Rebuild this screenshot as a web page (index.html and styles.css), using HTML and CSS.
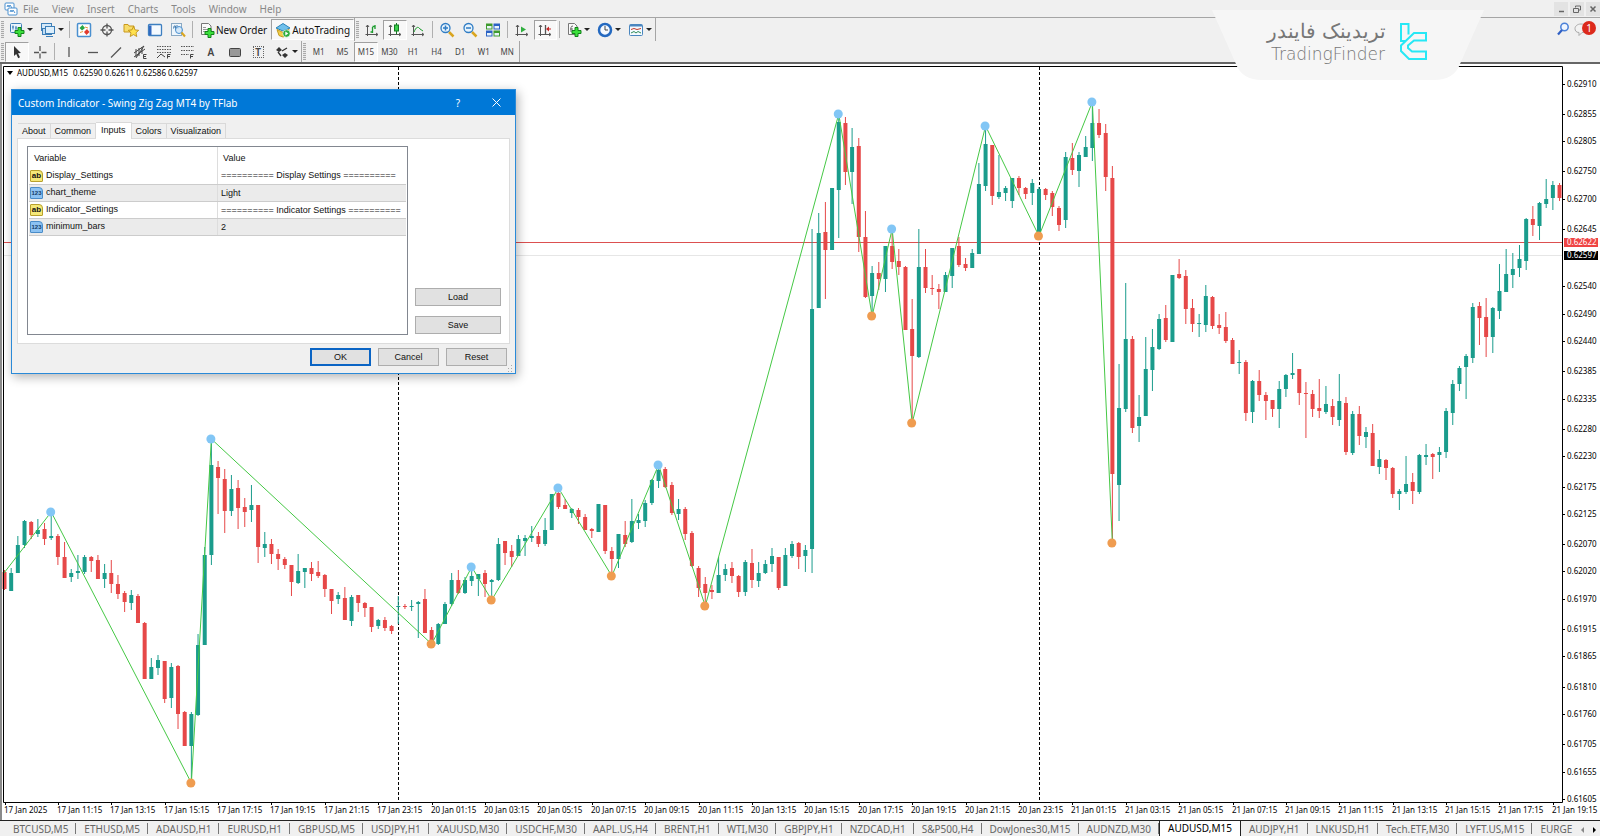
FILE: index.html
```html
<!DOCTYPE html>
<html lang="en">
<head>
    <meta charset="UTF-8">
    <meta name="viewport" content="width=device-width, initial-scale=1.0">
    <title>AUDUSD,M15</title>
    <link rel="stylesheet" href="styles.css">
</head>
<body>
    <header class="menubar">
        <svg class="app-icon" width="14" height="14" viewBox="0 0 14 14"><rect x="1" y="1" width="9" height="7" rx="1" fill="#fff" stroke="#4a90d0"/><path d="M3 5l1-2 1 2 1-2 2 3" fill="none" stroke="#4a90d0"/><rect x="4" y="6" width="9" height="7" rx="1" fill="#fff" stroke="#4a90d0"/><path d="M6 10l1-2 1 2 1-2 2 3" fill="none" stroke="#4a90d0"/></svg>
        <nav class="menu">
            <button>File</button>
            <button>View</button>
            <button>Insert</button>
            <button>Charts</button>
            <button>Tools</button>
            <button>Window</button>
            <button>Help</button>
        </nav>
        <div class="window-buttons">
            <button aria-label="Minimize"><svg width="8" height="8" viewBox="0 0 8 8"><path d="M2 6.500h5" stroke="#666" stroke-width="1.500"/></svg></button>
            <button aria-label="Restore"><svg width="8" height="8" viewBox="0 0 8 8"><path d="M2.500 2.500v-1.500h5v4h-1.500M.5 3.500h5v4h-5z" fill="none" stroke="#666"/></svg></button>
            <button aria-label="Close"><svg width="8" height="8" viewBox="0 0 8 8"><path d="M1.500 1.500l5 5M6.500 1.500l-5 5" stroke="#666" stroke-width="1.500"/></svg></button>
        </div>
    </header>

    <div class="toolbars">
        <div class="toolbar">
            <span class="grip"></span>
            <div class="group drops">
                <button aria-label="New chart"><svg class="icon" viewBox="0 0 16 16"><rect x="1.500" y="1.500" width="11" height="9" rx="1" fill="#eaf4fc" stroke="#3d7fb8"/><path d="M4 3.500v4M3 5h2M7 4v4M6 6h2" stroke="#3d7fb8"/><path d="M9 5.500h3v3h3v3h-3v3h-3v-3h-3v-3h3z" fill="#3be03b" stroke="#12821a"/></svg><i class="arrow"></i></button>
                <button aria-label="Profiles"><svg class="icon" viewBox="0 0 16 16"><rect x="1.500" y="1.500" width="10" height="7" fill="#d5e9f8" stroke="#3d7fb8"/><rect x="2.500" y="6.500" width="9" height="6" fill="#c2ddf4" stroke="#3d7fb8"/><rect x="5.500" y="4.500" width="9" height="7" fill="#dceefb" stroke="#3d7fb8"/><path d="M6 14.500h7" stroke="#3d7fb8"/></svg><i class="arrow"></i></button>
            </div>
            <span class="sep"></span>
            <div class="group five">
                <button aria-label="Market Watch"><svg class="icon" viewBox="0 0 16 16"><rect x="1.500" y="1.500" width="13" height="13" rx="1" fill="#fff" stroke="#4a90d0" stroke-width="1.500"/><path d="M3.500 6l3-3 2.500 3-3 2.500z" fill="#28a745"/><path d="M8 10l3-3 2.500 3-3 3z" fill="#e23b2e"/><path d="M4 10.500l3-1M9 5l3 1" stroke="#e89a3c"/></svg></button>
                <button aria-label="Data Window"><svg class="icon" viewBox="0 0 16 16"><circle cx="8" cy="8" r="4.500" fill="none" stroke="#555" stroke-width="1.300"/><path d="M8 1.500v5M8 9.500v5M1.500 8h5M9.500 8h5" stroke="#555" stroke-width="1.300"/></svg></button>
                <button aria-label="Navigator"><svg class="icon" viewBox="0 0 16 16"><path d="M1 2.500h4l1 1.500h5v6h-10z" fill="#f7dc6a" stroke="#c9981d"/><path d="M10.500 4.500l1.600 3.400 3.600.4-2.700 2.500.8 3.700-3.300-1.900-3.300 1.900.8-3.700-2.700-2.500 3.600-.4z" fill="#ffe14d" stroke="#b8860b" stroke-width=".8"/></svg></button>
                <button aria-label="Terminal"><svg class="icon" viewBox="0 0 16 16"><rect x="1.500" y="2.500" width="13" height="11" rx="1" fill="#f5faff" stroke="#3d7fc0" stroke-width="1.300"/><path d="M2 3.500h2.500v9.500h-2.500z" fill="#3169c0"/></svg></button>
                <button aria-label="Strategy Tester"><svg class="icon" viewBox="0 0 16 16"><rect x="1.500" y="1.500" width="10" height="12" fill="#eef6fc" stroke="#8aa9c4"/><path d="M3 6h1v-2h1.500v4M7 3v3h2" fill="none" stroke="#4a7fae"/><circle cx="9" cy="8" r="3.500" fill="#cfe6f8" fill-opacity=".8" stroke="#4a90d0"/><path d="M11.500 10.500l3.500 4" stroke="#d9a520" stroke-width="2"/></svg></button>
            </div>
            <span class="sep"></span>
            <button class="text-btn"><svg class="icon" viewBox="0 0 16 16"><path d="M2.500 1.500h7l2.500 2.500v8.500h-9.500z" fill="#fafafa" stroke="#777"/><path d="M4 5.500h3M4 7.500h5M4 9.500h2" stroke="#999"/><path d="M9 6.500h3v3h3v3h-3v3h-3v-3h-3v-3h3z" fill="#3be03b" stroke="#12821a"/></svg>New Order</button>
            <button class="text-btn pressed"><svg class="icon" viewBox="0 0 16 16"><path d="M1 6l7-4.500 7 4.500-7 3z" fill="#6fc0ec" stroke="#2c83b8"/><path d="M2 7.500l6 3 6-3-2 6-4 1.500-4-1.500z" fill="#f2cf4a" stroke="#c29a1c"/><circle cx="11.500" cy="11.500" r="3.700" fill="#2fae3e" stroke="#fff" stroke-width=".6"/><path d="M10.300 9.500l3 2-3 2z" fill="#fff"/></svg>AutoTrading</button>
            <span class="edge"></span>
            <span class="grip"></span>
            <div class="group three">
                <button aria-label="Bar Chart"><svg class="icon" viewBox="0 0 16 16"><path d="M3.500 3v11M1.500 12.500h12M2 5l1.500-2 1.500 2M12 11l2 1.500-2 1.500" fill="none" stroke="#555"/><path d="M8.500 5v6M8.500 4.500h3M6.500 10h2M11 3v4" stroke="#1c9c2e" stroke-width="1.300"/></svg></button>
                <button class="pressed" aria-label="Candlesticks"><svg class="icon" viewBox="0 0 16 16"><path d="M3.500 3v11M1.500 12.500h12M2 5l1.500-2 1.500 2M12 11l2 1.500-2 1.500" fill="none" stroke="#555"/><path d="M9.500 1v11" stroke="#147a22"/><rect x="7.500" y="3" width="4" height="6" fill="#3bd04c" stroke="#147a22"/></svg></button>
                <button aria-label="Line Chart"><svg class="icon" viewBox="0 0 16 16"><path d="M3.500 3v11M1.500 12.500h12M2 5l1.500-2 1.500 2M12 11l2 1.500-2 1.500" fill="none" stroke="#555"/><path d="M4 10c2-5 4-6 6-3l3 2" fill="none" stroke="#1c9c2e"/></svg></button>
            </div>
            <span class="sep"></span>
            <div class="group three">
                <button aria-label="Zoom In"><svg class="icon" viewBox="0 0 16 16"><path d="M10 10l4.500 4.500" stroke="#d9a520" stroke-width="2.500"/><circle cx="6.500" cy="6" r="4.500" fill="#e6f3fc" stroke="#2f7cc4" stroke-width="1.300"/><path d="M4 6h5M6.500 3.500v5" stroke="#2f7cc4" stroke-width="1.500"/></svg></button>
                <button aria-label="Zoom Out"><svg class="icon" viewBox="0 0 16 16"><path d="M10 10l4.500 4.500" stroke="#d9a520" stroke-width="2.500"/><circle cx="6.500" cy="6" r="4.500" fill="#e6f3fc" stroke="#2f7cc4" stroke-width="1.300"/><path d="M4 6h5" stroke="#2f7cc4" stroke-width="1.500"/></svg></button>
                <button aria-label="Tile Windows"><svg class="icon" viewBox="0 0 16 16"><path d="M1 1.500h6.500v6h-6.500zM8.500 8.500h6.500v6h-6.500z" fill="#3f9b2e"/><path d="M8.500 1.500h6.500v6h-6.500zM1 8.500h6.500v6h-6.500z" fill="#2b62c4"/><path d="M2 4h4.500v2.500h-4.500zM9.500 4h4.500v2.500h-4.500zM2 11h4.500v2.500h-4.500zM9.500 11h4.500v2.500h-4.500z" fill="#e8f3fb"/></svg></button>
            </div>
            <span class="sep"></span>
            <div class="group two">
                <button aria-label="Auto Scroll"><svg class="icon" viewBox="0 0 16 16"><path d="M3.500 3v11M1.500 12.500h12M2 5l1.500-2 1.500 2M12 11l2 1.500-2 1.500" fill="none" stroke="#555"/><path d="M7 4.500l5 3-5 3z" fill="#2fae3e"/></svg></button>
                <button class="pressed" aria-label="Chart Shift"><svg class="icon" viewBox="0 0 16 16"><path d="M3.500 3v11M1.500 12.500h12M2 5l1.500-2 1.500 2M12 11l2 1.500-2 1.500" fill="none" stroke="#555"/><path d="M8.500 3v9" stroke="#555" stroke-width="1.300"/><path d="M9 7l3-2.500v5z" fill="#c62828"/><path d="M11 7h3" stroke="#c62828"/></svg></button>
            </div>
            <span class="sep"></span>
            <div class="group drops">
                <button aria-label="Indicators"><svg class="icon" viewBox="0 0 16 16"><path d="M2.500 1.500h6l2.500 2.500v8.500h-8.500z" fill="#fafafa" stroke="#777"/><path d="M5 10V5.500q0-1.500 2-1.500M4 7h3" fill="none" stroke="#666"/><path d="M9 5.500h3v3h3v3h-3v3h-3v-3h-3v-3h3z" fill="#3be03b" stroke="#12821a"/></svg><i class="arrow"></i></button>
                <button aria-label="Periods"><svg class="icon" viewBox="0 0 16 16"><circle cx="8" cy="8" r="6" fill="#f4f9ff" stroke="#2469c0" stroke-width="2.500"/><path d="M8 4v4h3" fill="none" stroke="#444"/></svg><i class="arrow"></i></button>
                <button aria-label="Templates"><svg class="icon" viewBox="0 0 16 16"><rect x="1.500" y="2.500" width="13" height="11" rx="1" fill="#f4faff" stroke="#4a86bf"/><path d="M2 3.500h12" stroke="#4a86bf" stroke-width="2"/><path d="M3 7.500l3-1 3 1 4-1" fill="none" stroke="#c0392b"/><path d="M3 11l3-1.500 2 1.500 2-1.500 3 1.500" fill="none" stroke="#2e8b57"/></svg><i class="arrow"></i></button>
            </div>
            <span class="edge"></span>
            <div class="right-tools">
                <button aria-label="Search"><svg class="icon" viewBox="0 0 16 16"><circle cx="9.500" cy="6" r="3.700" fill="#eef5ff" stroke="#4a80d8" stroke-width="1.500"/><path d="M7 9l-4 4.500" stroke="#2f5fc4" stroke-width="2.200"/></svg></button>
                <button class="chat" aria-label="Messages"><svg class="icon" viewBox="0 0 16 16"><path d="M8 3c4 0 6 2 6 4.500s-2 4-5 4l-3 3v-3c-3 0-4-2-4-4s2-4.500 6-4.500z" fill="#f2f2f2" stroke="#aaa"/></svg><span class="count">1</span></button>
            </div>
        </div>

        <div class="toolbar second">
            <span class="grip"></span>
            <div class="group two">
                <button class="pressed" aria-label="Cursor"><svg class="icon" viewBox="0 0 16 16"><path d="M5 2l7 7-3 .2 2 4-1.800 1-2-4.200-2.200 2z" fill="#333"/></svg></button>
                <button aria-label="Crosshair"><svg class="icon" viewBox="0 0 16 16"><path d="M8 2v5M8 9.500v5M2 8.500h5M9.500 8.500h5" stroke="#555" stroke-width="1.300"/></svg></button>
            </div>
            <span class="sep"></span>
            <div class="group nine">
                <button aria-label="Vertical Line"><svg class="icon" viewBox="0 0 16 16"><path d="M8 3v10" stroke="#555" stroke-width="1.300"/></svg></button>
                <button aria-label="Horizontal Line"><svg class="icon" viewBox="0 0 16 16"><path d="M3 8.500h10" stroke="#555" stroke-width="1.300"/></svg></button>
                <button aria-label="Trendline"><svg class="icon" viewBox="0 0 16 16"><path d="M3 13.500l10-10" stroke="#555" stroke-width="1.200"/></svg></button>
                <button aria-label="Equidistant Channel"><svg class="icon" viewBox="0 0 16 16"><path d="M2 9l10-7M2 13l11-8M4 5v8M7 4v8M10 3v7M12 2l-8 12" stroke="#444"/><path d="M14.500 10.500h-3v4h3M11.500 12.500h2.500" fill="none" stroke="#444"/></svg></button>
                <button aria-label="Fibonacci Fan"><svg class="icon" viewBox="0 0 16 16"><path d="M1 2.500h14M1 5.500h14M1 8.500h14" stroke="#555" stroke-dasharray="1.500 1"/><path d="M1 14l4-4 4 3M14.500 10.500h-3v4M11.500 12.500h2.500" fill="none" stroke="#444"/></svg></button>
                <button aria-label="Fibonacci Retracement"><svg class="icon" viewBox="0 0 16 16"><path d="M2 2.500h13M2 6.500h13M2 10.500h8" stroke="#555" stroke-dasharray="1.500 1"/><path d="M14.500 10.500h-3v4M11.500 12.500h2.500" fill="none" stroke="#444"/></svg></button>
                <button class="letter">A</button>
                <button aria-label="Rectangle"><svg class="icon" viewBox="0 0 16 16"><rect x="2.500" y="4.500" width="11" height="8" rx="1" fill="#999" stroke="#444"/></svg></button>
                <button class="letter"><span class="label-tool">T</span></button>
            </div>
            <div class="group drops">
                <button aria-label="Arrows"><svg class="icon" viewBox="0 0 16 16"><path d="M2 6l3-3 3 3-3 2zM8 11l3-2 3 2-3 3z" fill="#333"/><path d="M4 8l3 4M8 7l5-3" stroke="#333" stroke-width="1.300"/></svg><i class="arrow"></i></button>
            </div>
            <span class="edge"></span>
            <span class="grip"></span>
            <div class="group periods">
                <button>M1</button>
                <button>M5</button>
                <button class="pressed">M15</button>
                <button>M30</button>
                <button>H1</button>
                <button>H4</button>
                <button>D1</button>
                <button>W1</button>
                <button>MN</button>
            </div>
            <span class="edge"></span>
        </div>
    </div>

    <div class="brand">
        <svg class="brand-shape" viewBox="0 0 272 70"><path d="M0 0h272l-24 54q-6 16-26 16h-172q-20 0-26-16z" fill="#f6f6f6"/></svg>
        <div class="brand-text">
            <span class="fa" lang="fa" dir="rtl">تریدینک فایندر</span>
            <span>TradingFinder</span>
        </div>
        <svg class="brand-logo" width="28" height="38" viewBox="0 0 28 38"><path d="M8.500 11.500V1H1v17h4M26 17.500V10H14L1 22.500V28l8 8h17v-7.500H12L8 25v-2.500l6-5z" fill="none" stroke="#27e8f5" stroke-width="2"/></svg>
    </div>

    <main class="workspace">
        <svg id="chart" class="chart" viewBox="0 64 1600 756" role="img" aria-label="AUDUSD M15 chart"></svg>

        <section class="dialog">
            <div class="dialog-title">
                <h1>Custom Indicator - Swing Zig Zag MT4 by TFlab</h1>
                <button aria-label="Help">?</button>
                <button aria-label="Close"><svg width="9" height="9" viewBox="0 0 9 9"><path d="M.5.5l8 8M8.500.5l-8 8" stroke="#fff"/></svg></button>
            </div>
            <div class="dialog-body">
                <div class="dialog-tabs">
                    <button>About</button>
                    <button>Common</button>
                    <button class="selected">Inputs</button>
                    <button>Colors</button>
                    <button>Visualization</button>
                </div>
                <div class="tab-page">
                    <div class="list">
                        <table>
                            <thead>
                                <tr><th>Variable</th><th>Value</th></tr>
                            </thead>
                            <tbody>
                                <tr><td><span class="type text">ab</span>Display_Settings</td><td>========== Display Settings ==========</td></tr>
                                <tr><td><span class="type num">123</span>chart_theme</td><td>Light</td></tr>
                                <tr><td><span class="type text">ab</span>Indicator_Settings</td><td>========== Indicator Settings ==========</td></tr>
                                <tr><td><span class="type num">123</span>minimum_bars</td><td>2</td></tr>
                            </tbody>
                        </table>
                    </div>
                    <div class="side">
                        <button class="btn">Load</button>
                        <button class="btn">Save</button>
                    </div>
                </div>
                <div class="dialog-footer">
                    <button class="btn default">OK</button>
                    <button class="btn">Cancel</button>
                    <button class="btn">Reset</button>
                </div>
            </div>
            <svg class="resize" width="7" height="7" viewBox="0 0 7 7"><path d="M5 0h1v1h-1zM5 3h1v1h-1zM2 3h1v1h-1zM5 6h1v1h-1zM2 6h1v1h-1z" fill="#aaa"/></svg>
        </section>
    </main>

    <footer class="chart-tabs">
        <div class="tab-strip">
            <button>BTCUSD,M5</button>
            <button>ETHUSD,M5</button>
            <button>ADAUSD,H1</button>
            <button>EURUSD,H1</button>
            <button>GBPUSD,M5</button>
            <button>USDJPY,H1</button>
            <button>XAUUSD,M30</button>
            <button>USDCHF,M30</button>
            <button>AAPL.US,H4</button>
            <button>BRENT,H1</button>
            <button>WTI,M30</button>
            <button>GBPJPY,H1</button>
            <button>NZDCAD,H1</button>
            <button>S&amp;P500,H4</button>
            <button>DowJones30,M15</button>
            <button>AUDNZD,M30</button>
            <button class="active">AUDUSD,M15</button>
            <button>AUDJPY,H1</button>
            <button>LNKUSD,H1</button>
            <button>Tech.ETF,M30</button>
            <button>LYFT.US,M15</button>
            <button>EURGE</button>
        </div>
        <button class="scroll" aria-label="Scroll left"><svg width="5" height="6" viewBox="0 0 5 6"><path d="M4 0v6l-3-3z" fill="#888"/></svg></button>
        <button class="scroll" aria-label="Scroll right"><svg width="5" height="6" viewBox="0 0 5 6"><path d="M1 0v6l3-3z" fill="#000"/></svg></button>
    </footer>

    <script src="chart.js"></script>
</body>
</html>
```

FILE: styles.css
```css
:root {
    --face: #f0f0f0;
    --line: #a5a5a5;
    --accent: #0078d7;
    --ui: "Noto Sans", "Open Sans", sans-serif;
    --dialog: "Liberation Sans", Arial, sans-serif;
}

* {
    box-sizing: border-box;
    margin: 0;
    padding: 0;
}

body {
    display: flex;
    flex-direction: column;
    min-height: 100vh;
    background-color: #fff;
    color: #111;
    font-family: var(--ui);
    font-size: 10px;
    line-height: 14px;
    overflow: hidden;
}

button {
    border: 1px solid transparent;
    background: none;
    color: inherit;
    font: inherit;
    white-space: nowrap;
}

/* menu */
.menubar {
    display: flex;
    align-items: center;
    height: 18px;
    padding-left: 4px;
    background-color: var(--face);
    border-bottom: 1px solid var(--line);
}

.menu {
    display: flex;
    gap: 11px;
    margin-left: 4px;
    color: #888;
}

.window-buttons {
    display: flex;
    gap: 2px;
    margin-left: auto;
}

.window-buttons button {
    display: flex;
    align-items: center;
    justify-content: center;
    width: 14px;
    height: 14px;
    background-color: #e3e3e3;
}

/* toolbars */
.toolbars {
    background-color: var(--face);
    border-bottom: 2px solid #666;
}

.toolbar {
    display: flex;
    align-items: center;
    height: 23px;
}

.toolbar.second {
    height: 21px;
}

.grip {
    width: 3px;
    height: 17px;
    margin: 0 1px;
    background: repeating-linear-gradient(#aaa 0 1px, #e8e8e8 1px 2px);
}

.sep {
    width: 1px;
    height: 17px;
    margin: 0 2px;
    background-color: #b0b0b0;
}

.edge {
    width: 1px;
    height: 100%;
    background-color: var(--line);
}

.group {
    display: flex;
    height: 20px;
}

.group button {
    display: flex;
    flex: 1;
    align-items: center;
    justify-content: center;
}

.group.two { width: 47px; }
.group.three { width: 70px; }
.group.five { width: 118px; }
.group.nine { width: 213px; }
.group.periods {
    width: 212px;
    color: #444;
    font-size: 8px;
}

.group.drops button {
    flex: none;
    gap: 2px;
    width: 31px;
}

.toolbar .pressed {
    border-color: #a0a0a0 #fff #fff #a0a0a0;
    background-color: #f8f8f8;
}

.icon {
    flex: none;
    width: 16px;
    height: 16px;
}

.arrow {
    border: 3px solid transparent;
    border-top-color: #222;
    border-bottom-width: 0;
}

.text-btn {
    display: flex;
    align-items: center;
    gap: 1px;
    height: 21px;
    padding: 0 3px;
}

.letter {
    color: #444;
    font-weight: 600;
}

.label-tool {
    width: 11px;
    border: 1px dotted #666;
    line-height: 10px;
}

.right-tools {
    display: flex;
    margin-left: auto;
}

.chat {
    position: relative;
    width: 28px;
    text-align: left;
}

.right-tools button {
    height: 20px;
}

.count {
    position: absolute;
    top: 0;
    right: 3px;
    width: 14px;
    height: 14px;
    border-radius: 50%;
    background-color: #dc2a1c;
    color: #fff;
    font-size: 10px;
    line-height: 14px;
    text-align: center;
}

/* logo over the toolbar */
.brand {
    position: absolute;
    top: 10px;
    right: 116px;
    display: flex;
    gap: 14px;
    width: 272px;
    height: 70px;
    padding: 10px 0 0 59px;
    z-index: 2;
}

.brand-shape {
    position: absolute;
    inset: 0;
}

.brand-text {
    position: relative;
    display: flex;
    flex-direction: column;
    width: 115px;
    color: #777;
    font-family: "DejaVu Sans", sans-serif;
    font-size: 17px;
    font-weight: 200;
    line-height: 23px;
    white-space: nowrap;
}

.brand-text .fa {
    font-size: 20px;
}

.brand-logo {
    position: relative;
    margin-top: 3px;
}

/* chart */
.workspace {
    position: relative;
}

.chart {
    display: block;
    width: 100%;
    height: auto;
    font-size: 8px;
}

.window-edge { fill: #8a8a8a; }
.frame { fill: none; stroke: #000; }
.up { fill: #1a9c8c; stroke: #1a9c8c; }
.down { fill: #e64848; stroke: #e64848; }
.zigzag { fill: none; stroke: #45c845; }
.peak { fill: #82c6f5; }
.valley { fill: #ef9c50; }
.day { stroke: #000; stroke-dasharray: 3 2; }
.ask { stroke: #dc5050; }
.bid { stroke: #e6e6e6; }
.ask-box { fill: #ef4444; }
.bid-box { fill: #000; }
.tag { fill: #fff; }

/* dialog */
.dialog {
    position: absolute;
    top: 25px;
    left: 11px;
    width: 505px;
    border: 1px solid #2a8ad8;
    background-color: var(--face);
    box-shadow: 2px 3px 10px rgba(0, 0, 0, 0.3);
    color: #111;
    font-family: var(--dialog);
    font-size: 9px;
    line-height: 12px;
}

.dialog-title {
    display: flex;
    align-items: center;
    height: 25px;
    padding-left: 6px;
    background-color: var(--accent);
    color: #fff;
    font-family: var(--ui);
    font-size: 10px;
}

.dialog-title h1 {
    flex: 1;
    font-size: 10px;
    font-weight: 400;
}

.dialog-title button {
    width: 38px;
}

.dialog-body {
    padding: 7px 5px;
}

.dialog-tabs {
    display: flex;
    align-items: flex-end;
    height: 16px;
    padding-left: 1px;
}

.dialog-tabs button {
    height: 15px;
    padding: 0 4px;
    border-color: #d9d9d9;
    border-bottom: 0;
    border-left-width: 0;
}

.dialog-tabs .selected {
    height: 17px;
    margin-bottom: -1px;
    padding: 0 5px 2px;
    background-color: #fff;
}

.tab-page {
    display: flex;
    gap: 7px;
    height: 206px;
    padding: 7px 8px 8px 9px;
    border: 1px solid #dcdcdc;
    background-color: #fff;
}

.list {
    width: 382px;
    border: 1px solid #828790;
    padding: 0 1px;
}

.list table {
    width: 100%;
    border-collapse: collapse;
    table-layout: fixed;
}

.list th {
    height: 20px;
    padding: 1px 5px 0;
    font-weight: 400;
    text-align: left;
}

.list td {
    height: 17px;
    padding: 0 3px;
    border-bottom: 1px solid #ccc;
    white-space: nowrap;
}

.list th + th,
.list td + td {
    border-left: 1px solid #ddd;
}

.list td:first-child {
    padding-left: 1px;
}

.list tr:nth-child(even) td {
    background-color: #ebebeb;
}

.type {
    display: inline-block;
    width: 13px;
    height: 12px;
    margin-right: 3px;
    border: 1px solid #b8a02c;
    border-radius: 1px 4px 1px 1px;
    background-color: #f5e878;
    font-size: 8px;
    font-weight: 700;
    line-height: 10px;
    text-align: center;
    vertical-align: middle;
}

.type.num {
    border-color: #4a8cc8;
    background-color: #8cc2f2;
    color: #123a66;
    font-size: 6px;
}

.side {
    display: flex;
    flex-direction: column;
    justify-content: flex-end;
    gap: 10px;
    width: 86px;
    padding-bottom: 1px;
}

.btn {
    height: 18px;
    border: 1px solid #adadad;
    background-color: #e1e1e1;
}

.btn.default {
    border: 2px solid #0a64c4;
}

.dialog-footer {
    display: flex;
    justify-content: flex-end;
    gap: 7px;
    padding: 4px 3px 0;
}

.dialog-footer .btn {
    width: 61px;
}

.resize {
    position: absolute;
    right: 2px;
    bottom: 1px;
}

/* chart tabs */
.chart-tabs {
    display: flex;
    height: 16px;
    border-top: 1px solid #222;
    background-color: var(--face);
    color: #666;
}

.tab-strip {
    display: flex;
    flex: 1;
    min-width: 0;
    padding-left: 5px;
    overflow: hidden;
}

.tab-strip button {
    position: relative;
    flex: none;
    padding: 0 8px;
    border: 0;
}

.tab-strip button::after {
    position: absolute;
    top: 2px;
    right: 0;
    width: 1px;
    height: 11px;
    background-color: #777;
    content: "";
}

.tab-strip .active {
    margin-top: -1px;
    border: solid #222;
    border-width: 0 1px;
    background-color: #fff;
    color: #000;
}

.tab-strip button:last-child {
    padding-right: 0;
}

.tab-strip .active::after,
.tab-strip button:last-child::after {
    display: none;
}

.scroll {
    width: 12px;
}
```

FILE: chart.js
```js
// bars as [high, open, close, low], in chart units counted downwards
const bars = [
    [570,572,589,590],[568,591,573,591],[536,573,545,573],[520,545,521,548],[521,522,535,539],
    [519,534,530,537],[523,529,539,545],[514,538,536,540],[534,536,557,565],[542,557,578,578],
    [569,577,573,582],[555,573,571,579],[555,572,557,574],[556,557,561,572],[555,560,579,579],
    [564,579,573,588],[560,573,584,593],[575,584,594,599],[591,593,602,612],[590,603,595,610],
    [594,596,623,623],[622,623,679,679],[658,679,667,679],[655,668,660,675],[661,661,699,703],
    [663,698,667,708],[665,666,714,729],[711,712,746,746],[712,746,714,780],[634,715,645,716],
    [547,645,555,645],[441,555,465,565],[461,467,478,514],[469,479,511,533],[475,511,489,516],
    [480,488,508,529],[498,507,512,527],[485,510,505,522],[505,505,547,563],[532,548,544,557],
    [539,544,554,564],[549,554,559,570],[557,559,565,569],[565,565,582,596],[554,583,571,584],
    [568,572,568,588],[562,568,574,581],[561,572,576,578],[574,575,589,597],[589,589,601,614],
    [592,599,595,604],[587,598,620,620],[595,621,597,626],[595,595,603,612],[602,603,608,617],
    [607,607,627,632],[619,626,620,629],[617,620,628,631],[625,626,631,634],[596,606,606,624],
    [604,606,607,609],[600,607,606,611],[601,604,602,638],[589,599,633,633],[627,630,643,644],
    [623,644,624,645],[602,624,604,624],[573,604,580,606],[570,580,593,594],[577,593,580,594],
    [569,581,576,586],[574,579,574,596],[570,573,584,597],[579,582,580,599],[538,580,544,581],
    [541,541,553,565],[545,551,557,567],[535,556,539,556],[535,541,538,556],[526,538,536,542],
    [532,536,544,547],[518,544,530,546],[494,530,494,530],[490,493,507,509],[499,505,509,509],
    [508,513,509,518],[508,510,517,524],[514,517,530,530],[528,529,531,538],[504,532,504,532],
    [505,505,551,554],[547,551,559,575],[534,559,534,568],[521,535,544,547],[499,542,521,543],
    [514,523,520,529],[500,521,503,527],[479,503,480,505],[466,481,470,488],[467,469,487,488],
    [482,485,513,515],[499,514,509,520],[507,509,534,540],[531,533,566,567],[566,568,588,597],
    [577,584,593,603],[585,590,592,599],[557,593,575,593],[564,575,569,581],[562,568,576,583],
    [575,576,592,597],[560,592,562,596],[549,563,580,588],[562,581,573,587],[560,573,564,574],
    [548,564,556,572],[557,557,588,590],[548,586,555,586],[541,556,544,558],[542,543,557,569],
    [545,556,550,572],[229,549,309,573],[213,308,233,308],[202,232,250,299],[188,250,188,250],
    [117,190,122,238],[117,123,172,185],[128,172,147,204],[138,146,237,252],[211,237,297,298],
    [266,296,273,315],[262,273,279,290],[246,279,246,292],[232,246,262,269],[249,261,267,275],
    [266,267,330,330],[299,329,356,422],[229,357,267,358],[249,267,288,293],[275,288,289,295],
    [284,289,292,309],[272,292,275,292],[248,276,248,288],[237,246,265,267],[258,264,268,271],
    [249,268,253,268],[163,254,184,254],[128,186,144,191],[145,145,196,205],[155,197,192,199],
    [186,193,188,201],[178,201,178,208],[176,178,188,195],[187,188,194,199],[179,193,183,205],
    [187,235,189,236],[188,189,195,200],[191,193,207,216],[206,208,225,231],[152,220,157,228],
    [143,158,170,175],[152,171,155,187],[136,157,147,157],[105,148,123,161],[109,123,135,138],
    [124,133,177,191],[166,178,474,540],[364,485,408,521],[283,409,339,412],[336,339,428,433],
    [395,426,417,442],[337,416,369,416],[329,370,347,391],[314,349,319,350],[305,318,340,342],
    [275,342,275,342],[259,274,278,279],[270,276,309,324],[299,308,324,332],[314,323,323,337],
    [285,325,296,332],[296,297,326,329],[314,325,328,334],[312,327,341,343],[338,340,364,364],
    [350,362,362,374],[360,362,413,421],[380,412,381,423],[370,381,395,401],[392,395,401,420],
    [400,400,409,417],[381,409,389,428],[374,389,375,397],[353,375,373,379],[369,369,393,405],
    [382,393,394,438],[390,394,409,417],[379,408,411,418],[386,412,404,414],[399,406,417,425],
    [374,420,401,426],[397,403,452,455],[411,453,414,455],[406,414,436,445],[427,437,432,448],
    [424,433,466,466],[450,467,459,474],[459,460,468,480],[467,468,494,498],[489,494,491,510],
    [456,492,484,494],[473,482,491,504],[454,492,455,494],[444,457,455,465],[453,454,457,479],
    [447,455,452,472],[408,452,411,458],[380,413,384,425],[366,384,368,391],[354,367,356,399],
    [303,358,307,363],[302,306,318,345],[298,317,337,357],[307,337,308,353],[264,311,291,319],
    [249,292,274,292],[253,275,269,288],[245,268,259,277],[218,261,219,270],[206,219,225,236],
    [202,226,203,240],[179,204,199,208],[181,198,185,210],[183,185,198,201]
];

// swing points as [bar, position, type]
const swings = [
    [7,512,'peak'],[28,783,'valley'],[31,439,'peak'],[64,644,'valley'],[70,567,'peak'],
    [73,600,'valley'],[83,488,'peak'],[91,576,'valley'],[98,465,'peak'],[105,606,'valley'],
    [125,114,'peak'],[130,316,'valley'],[133,229,'peak'],[136,423,'valley'],[147,126,'peak'],
    [155,236,'valley'],[163,102,'peak'],[166,543,'valley']
];

const prices = [
    62910,62855,62805,62750,62700,62645,62540,62490,62440,62385,62335,62280,62230,
    62175,62125,62070,62020,61970,61915,61865,61810,61760,61705,61655,61605
];

const times = [
    '17 Jan 2025','17 Jan 11:15','17 Jan 13:15','17 Jan 15:15','17 Jan 17:15','17 Jan 19:15',
    '17 Jan 21:15','17 Jan 23:15','20 Jan 01:15','20 Jan 03:15','20 Jan 05:15','20 Jan 07:15',
    '20 Jan 09:15','20 Jan 11:15','20 Jan 13:15','20 Jan 15:15','20 Jan 17:15','20 Jan 19:15',
    '20 Jan 21:15','20 Jan 23:15','21 Jan 01:15','21 Jan 03:15','21 Jan 05:15','21 Jan 07:15',
    '21 Jan 09:15','21 Jan 11:15','21 Jan 13:15','21 Jan 15:15','21 Jan 17:15','21 Jan 19:15'
];

const barX = i => 4.5 + i * 6.674;
const priceY = p => 83.5 + (62910 - p) * 0.5483;
const label = p => '0.' + p;

let out = '<rect class="window-edge" x="0" y="64" width="2" height="756"/>';

// current prices and day separators
out += '<path class="bid" d="M4 255.500H1562"/>';
out += '<path class="ask" d="M4 242.500H1562"/>';
out += '<path class="day" d="M398.500 67V802M1039.500 67V802"/>';

bars.forEach(([high, open, close, low], i) => {
    const x = barX(i);
    const top = Math.min(open, close);
    const height = Math.max(1, Math.abs(close - open));
    out += `<g class="${close > open ? 'down' : 'up'}">` +
        `<path d="M${x} ${high}V${low}"/>` +
        `<rect x="${x - 2}" y="${top}" width="4" height="${height}" stroke="none"/></g>`;
});

const line = swings.map(([i, y]) => `${barX(i)} ${y}`).join('L');
out += `<path class="zigzag" d="M4 573L${line}"/>`;
swings.forEach(([i, y, type]) => {
    out += `<circle class="${type}" cx="${barX(i) - 0.5}" cy="${y}" r="4.500"/>`;
});

// frame and axes
out += '<path class="frame" d="M3.500 66.500H1562.500V802.500H3.500z"/>';
prices.forEach(p => {
    const y = Math.round(priceY(p));
    out += `<path class="frame" d="M1562 ${y + 0.5}h3"/><text x="1567" y="${y + 3}">${label(p)}</text>`;
});
times.forEach((t, k) => {
    const x = Math.round(barX(k * 8));
    out += `<path class="frame" d="M${x + 0.5} 802v3"/><text x="${x - 1}" y="813">${t}</text>`;
});
out += '<rect class="ask-box" x="1564" y="238" width="34" height="9"/>';
out += `<text class="tag" x="1567" y="245">${label(62622)}</text>`;
out += '<rect class="bid-box" x="1564" y="251" width="34" height="9"/>';
out += `<text class="tag" x="1567" y="258">${label(62597)}</text>`;

out += '<path d="M7 71h6l-3 4z"/>';
out += '<text x="17" y="76">AUDUSD,M15</text><text x="73" y="76">0.62590 0.62611 0.62586 0.62597</text>';

document.getElementById('chart').innerHTML = out;
```
